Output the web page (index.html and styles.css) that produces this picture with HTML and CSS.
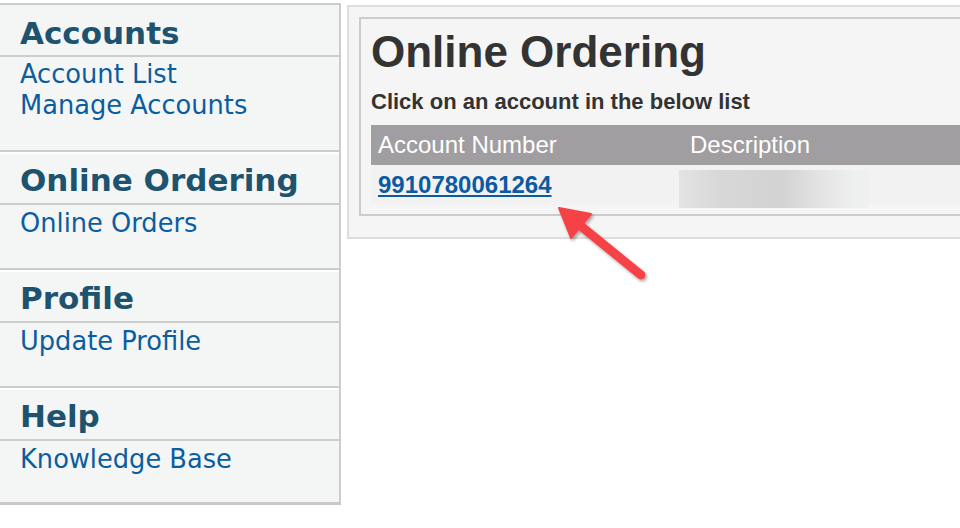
FILE: index.html
```html
<!DOCTYPE html>
<html lang="en">
<head>
  <meta charset="UTF-8">
  <meta name="viewport" content="width=device-width, initial-scale=1.0">
  <link rel="stylesheet" href="styles.css">
  <title>Online Ordering</title>
</head>
<body>
  <div class="page">
    <div class="sidebar">
      <div class="section">
        <h2>Accounts</h2>
        <div class="links">
          <a href="#">Account List</a>
          <a href="#">Manage Accounts</a>
        </div>
      </div>
      <div class="section">
        <h2>Online Ordering</h2>
        <div class="links">
          <a href="#">Online Orders</a>
        </div>
      </div>
      <div class="section">
        <h2>Profile</h2>
        <div class="links">
          <a href="#">Update Profile</a>
        </div>
      </div>
      <div class="section last">
        <h2>Help</h2>
        <div class="links">
          <a href="#">Knowledge Base</a>
        </div>
      </div>
    </div>
    <div class="main">
      <div class="panel">
        <div class="box">
          <h1>Online Ordering</h1>
          <p class="hint">Click on an account in the below list</p>
          <table class="accounts">
            <tr>
              <th class="col-num">Account Number</th>
              <th>Description</th>
            </tr>
            <tr>
              <td><a href="#">9910780061264</a></td>
              <td class="desc"><div class="redact"></div></td>
            </tr>
          </table>
        </div>
      </div>
    </div>
  </div>
  <svg class="arrow" width="130" height="110" viewBox="540 190 130 110">
    <defs>
      <filter id="shadow" x="-20%" y="-20%" width="150%" height="150%">
        <feDropShadow dx="1.5" dy="2" stdDeviation="1.5" flood-color="#000" flood-opacity="0.35"/>
      </filter>
    </defs>
    <g filter="url(#shadow)" fill="#f44347" stroke="#f44347">
      <line x1="641" y1="275" x2="582" y2="227" stroke-width="9" stroke-linecap="round"/>
      <polygon points="559,208 591,214 571,238" stroke-width="2" stroke-linejoin="round"/>
    </g>
  </svg>
</body>
</html>
```

FILE: styles.css
```css
  body {
    margin: 0;
    background-color: white;
  }

  .page {
    display: flex;
    align-items: flex-start;
  }

  .sidebar {
    flex: none;
    width: 339px;
    margin-top: 3px;
    background-color: #f4f6f5;
    border-top: 2px solid #cccccc;
    border-right: 2px solid #cccccc;
    border-bottom: 3px solid #c8c8c8;
    font-family: "DejaVu Sans", Verdana, sans-serif;
  }

  .section {
    border-bottom: 2px solid #cccccc;
  }

  .section + .section {
    border-top: 2px solid white;
  }

  .section.last {
    border-bottom: none;
  }

  .section h2 {
    margin: 0;
    padding: 10px 20px 4px;
    font-size: 31px;
    line-height: 36px;
    font-weight: bold;
    color: #1e5370;
    border-bottom: 2px solid #cccccc;
  }

  .section + .section h2 {
    padding: 8px 20px 5px;
  }

  .links {
    display: flex;
    flex-direction: column;
    padding: 2px 20px 29px;
  }

  .section + .section .links {
    padding-top: 3px;
  }

  .section.last .links {
    padding-bottom: 27px;
  }

  .links a {
    font-size: 25.7px;
    line-height: 31px;
    color: #0c5d9f;
    text-decoration: none;
  }

  .main {
    flex: 1;
    min-width: 0;
    margin-left: 6px;
    margin-top: 5px;
    font-family: "Liberation Sans", Arial, sans-serif;
  }

  .panel {
    background-color: #f5f5f5;
    border: 2px solid #dddddd;
    border-right: none;
    padding: 10px 0 21px 10px;
  }

  .box {
    border: 2px solid #cccccc;
    border-right: none;
    padding: 9px 0 9px 10px;
  }

  .box h1 {
    margin: 0;
    font-size: 44px;
    line-height: 48px;
    color: #333333;
  }

  .hint {
    margin: 13px 0 0;
    font-size: 22px;
    font-weight: bold;
    line-height: 26px;
    color: #333333;
  }

  .accounts {
    margin-top: 10px;
    width: 100%;
    border-collapse: collapse;
  }

  .accounts th {
    background-color: #a09ea0;
    color: white;
    font-weight: normal;
    font-size: 24px;
    line-height: 40px;
    text-align: left;
    padding: 0 0 0 7px;
  }

  .accounts .col-num {
    width: 305px;
  }

  .accounts td {
    background-color: #f2f2f2;
    font-size: 24px;
    line-height: 40px;
    padding: 0 0 0 7px;
  }

  .accounts td a {
    color: #0b5aa3;
    font-weight: bold;
  }

  .desc {
    position: relative;
  }

  .redact {
    position: absolute;
    left: -4px;
    top: 5px;
    width: 190px;
    height: 38px;
    background: linear-gradient(90deg, #e3e3e3 0%, #d7d7d7 22%, #d3d3d3 55%, #e4e5e4 76%, #eef0ef 92%, #f0f0f0 100%);
  }

  .arrow {
    position: absolute;
    left: 540px;
    top: 190px;
  }
```
